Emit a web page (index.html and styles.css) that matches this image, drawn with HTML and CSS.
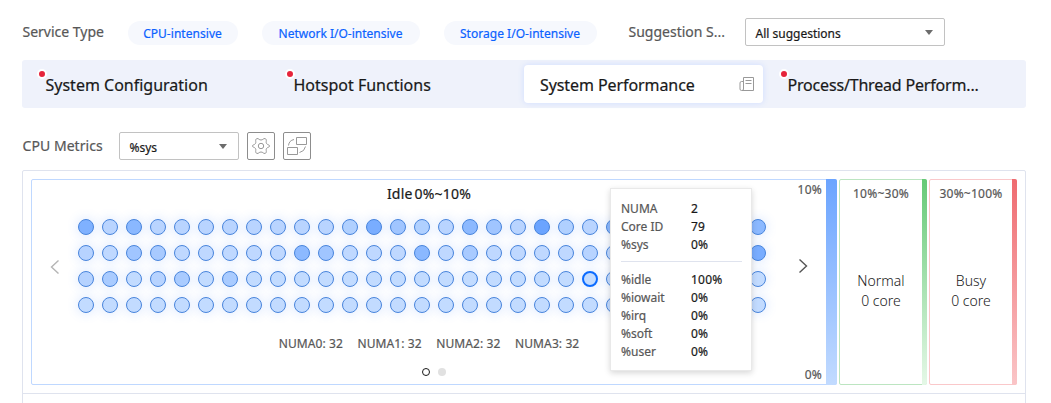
FILE: index.html
```html
<!DOCTYPE html>
<html lang="en">
<head>
<meta charset="utf-8">
<title>System Performance</title>
<link rel="stylesheet" href="styles.css">
</head>
<body>
<div class="page">
  <div class="filters">
    <span class="label label-service">Service Type</span>
    <span class="chip chip-cpu">CPU-intensive</span>
    <span class="chip chip-net">Network I/O-intensive</span>
    <span class="chip chip-sto">Storage I/O-intensive</span>
    <span class="label label-suggestion">Suggestion S...</span>
    <div class="select select-suggestion"><span>All suggestions</span><i class="caret"></i></div>
  </div>
  <div class="tabs">
    <div class="tab tab-config"><i class="dot"></i><span>System Configuration</span></div>
    <div class="tab tab-hotspot"><i class="dot"></i><span>Hotspot Functions</span></div>
    <div class="tab tab-active"><span>System Performance</span>
      <svg class="report" width="16" height="16" viewBox="0 0 16 16" fill="none" stroke="#999"><path d="M4.500 1.500h10v13H2.500a1.500 1.500 0 0 1-1.500-1.500V7a1.500 1.500 0 0 1 1.500-1.500h2M4.500 1.500V13a1.500 1.500 0 0 1-1.500 1.500M6.500 4.500h6M6.500 7.500h6"/></svg>
    </div>
    <div class="tab tab-process"><i class="dot"></i><span>Process/Thread Perform...</span></div>
  </div>
  <div class="metrics">
    <span class="label label-metrics">CPU Metrics</span>
    <div class="select select-metric"><span>%sys</span><i class="caret"></i></div>
    <button class="tool"><svg width="20" height="20" viewBox="0 0 20 20" fill="none" stroke="#999" stroke-linejoin="round"><path d="M6 2.500C8 2.500 8 4 10 4S12 2.500 14 2.500C16.500 3.500 14.500 6 15.500 7.500S18.500 8.500 18.500 10 16.500 11 15.500 12.500 16.500 16.500 14 17.500C12 17.500 12 16 10 16S8 17.500 6 17.500C3.500 16.500 5.500 14 4.500 12.500S1.500 11.500 1.500 10 3.500 9 4.500 7.500 3.500 3.500 6 2.500Z"/><circle cx="10" cy="10" r="2.700"/></svg></button>
    <button class="tool"><svg width="20" height="20" viewBox="0 0 20 20" fill="none" stroke="#999"><path d="M9.500 1.500h10v7h-10zM.500 11.500h10v7h-10zM1.500 9.500Q2 4.500 7 3.500M12.500 16.500Q17.500 15.500 18.500 10.500"/></svg></button>
  </div>
  <div class="panel">
    <div class="zones">
      <div class="idle">
        <div class="arrow"><svg width="10" height="14" viewBox="0 0 10 14" fill="none" stroke="#b5b5b5" stroke-width="1.400"><path d="M8.500 .500L1.500 7l7 6.500"/></svg></div>
        <div class="core-map">
          <div class="idle-title"><span>Idle</span><span>0%~10%</span></div>
          <div class="cores" id="cores"></div>
          <div class="numa"><span>NUMA0: 32</span><span>NUMA1: 32</span><span>NUMA2: 32</span><span>NUMA3: 32</span></div>
          <div class="pager"><i class="page-dot current"></i><i class="page-dot"></i></div>
          <div class="tooltip">
            <dl><dt>NUMA</dt><dd>2</dd><dt>Core ID</dt><dd>79</dd><dt>%sys</dt><dd>0%</dd></dl>
            <dl><dt>%idle</dt><dd>100%</dd><dt>%iowait</dt><dd>0%</dd><dt>%irq</dt><dd>0%</dd><dt>%soft</dt><dd>0%</dd><dt>%user</dt><dd>0%</dd></dl>
          </div>
        </div>
        <div class="arrow next"><svg width="10" height="14" viewBox="0 0 10 14" fill="none" stroke="#555" stroke-width="1.400"><path d="M1.500 .500L8.500 7l-7 6.500"/></svg></div>
        <div class="scale"><span>10%</span><span>0%</span></div>
        <div class="bar bar-blue"></div>
      </div>
      <div class="zone normal">
        <div class="zone-body"><span class="range">10%~30%</span><div class="state"><span>Normal</span><span>0 core</span></div></div>
        <div class="bar bar-green"></div>
      </div>
      <div class="zone busy">
        <div class="zone-body"><span class="range">30%~100%</span><div class="state"><span>Busy</span><span>0 core</span></div></div>
        <div class="bar bar-red"></div>
      </div>
    </div>
  </div>
</div>
<script src="cores.js"></script>
</body>
</html>
```
FILE: styles.css
```css
* { box-sizing: border-box; }
body { margin: 0; background: #fff; color: #191919; font: 13px/18px "Noto Sans", sans-serif; overflow: hidden; -webkit-text-stroke: .2px; }
.page { height: 403px; padding: 18px 25px 0 22px; overflow: hidden; white-space: nowrap; }
.filters { display: flex; height: 28px; align-items: center; }
.label { font-size: 14px; line-height: 20px; color: #575757; flex: none; padding-left: .5px; }
.label-service { width: 106px; }
.label-metrics { width: 97px; letter-spacing: .05px; }
.chip { flex: none; height: 24px; padding: 4px 1px 0 0; border-radius: 12px; background: #f6f8fd; color: #0b62ff; font-size: 12px; text-align: center; margin-top: 2px; }
.chip-cpu { width: 110px; margin-right: 24px; letter-spacing: .04px; }
.chip-net { width: 158px; margin-right: 24px; }
.chip-sto { width: 153px; margin-right: 31px; letter-spacing: .03px; }
.label-suggestion { width: 117px; }
.select { display: flex; justify-content: space-between; align-items: center; height: 28px; border: 1px solid #c2c2c2; border-radius: 2px; padding: 3px 11px 0 9.5px; font-size: 12px; flex: none; }
.select-suggestion { width: 200px; }
.select-metric { width: 120px; margin-right: 8px; }
.caret { border: 4px solid transparent; border-top: 5px solid #6c6c6c; border-bottom: 0; margin-top: -3px; }
.tabs { display: flex; height: 48px; margin-top: 14px; width: 1004px; background: #eff2fb; border-radius: 3px; padding: 5px 0; font-size: 16px; line-height: 24px; }
.tab { position: relative; display: flex; align-items: center; height: 38px; padding-left: 23.5px; }
.tab span { padding-top: 2px; }
.tab-config { width: 248px; }
.tab-hotspot { width: 254px; }
.tab-active { width: 239px; padding: 0 8px 0 16px; justify-content: space-between; background: #fff; border-radius: 4px; box-shadow: 0 0 6px #cfdcff; letter-spacing: -.08px; }
.tab-process { padding-left: 24.500px; letter-spacing: -.18px; }
.dot { position: absolute; left: 15px; top: 4px; width: 10px; height: 10px; border: 2px solid #fff; border-radius: 50%; background: #e6243b; }
.tab-process .dot { left: 16px; }
.metrics { display: flex; align-items: center; height: 28px; margin-top: 24px; }
.tool { width: 28px; height: 28px; margin-right: 8px; padding: 3px; border: 1px solid #8d8d8d; border-radius: 2px; background: #fff; }
.tool svg { display: block; }
.panel { width: 1004px; height: 240px; margin-top: 10px; border: 1px solid #dfe3ee; border-radius: 2px 2px 0 0; }
.zones { display: flex; gap: 2px; height: 223px; padding: 8px; border-bottom: 1px solid #dfe3ee; }
.idle { display: flex; width: 806px; height: 206px; border: 1px solid #bfd8ff; border-radius: 2px; flex: none; }
.arrow { width: 46px; padding: 80px 0 0 18px; flex: none; }
.arrow.next { width: 47px; padding: 79px 0 0 40px; }
.arrow svg { display: block; }
.core-map { position: relative; width: 680px; flex: none; }
.idle-title { display: flex; justify-content: center; gap: 2px; height: 20px; margin-top: 4px; font-size: 14px; line-height: 20px; padding-left: 22px; letter-spacing: .2px; }
.cores { display: grid; grid-template-columns: repeat(29, 16px); gap: 10px 8px; margin-top: 15px; width: 688px; }
.core { height: 16px; border: 1px solid #4985dc; border-radius: 50%; box-shadow: 0 0 12px rgba(62, 130, 255, .22); }
.core.selected { border: 2px solid #0b6bff; }
.numa { display: flex; justify-content: center; gap: 14.500px; margin-top: 22px; font-size: 12px; color: #575757; padding-left: 22px; letter-spacing: .1px; }
.pager { display: flex; justify-content: center; gap: 8px; margin-top: 15px; padding-left: 32px; }
.page-dot { width: 8px; height: 8px; border-radius: 50%; background: #e1e1e1; }
.page-dot.current { background: #fff; border: 1.5px solid #191919; }
.tooltip { position: absolute; left: 532px; top: 8px; width: 142px; height: 183px; padding: 11px 9px 0 10px; background: #fff; border: 1px solid #e9e9e9; box-shadow: 0 2px 6px rgba(0, 0, 0, .16); font-size: 12px; }
.tooltip dl { display: grid; grid-template-columns: 70px 1fr; margin: 0; line-height: 18px; }
.tooltip dl + dl { border-top: 1px solid #dfe3ee; margin-top: 7px; padding-top: 9px; }
.tooltip dt { color: #575757; }
.tooltip dd { margin: 0; letter-spacing: .25px; }
.scale { display: flex; flex-direction: column; justify-content: space-between; width: 20px; align-items: flex-end; padding: 1px 3px 0 0; font-size: 12px; color: #575757; flex: none; letter-spacing: .25px; }
.bar { flex: none; margin: -1px -1px -1px auto; }
.bar-blue { width: 11px; background: linear-gradient(#6ba4ff, #c2dbff); border-radius: 0 2px 2px 0; }
.bar-green { width: 5px; background: linear-gradient(#66c976, #e5f8e7); border-radius: 0 2px 2px 0; }
.bar-red { width: 5px; background: linear-gradient(#ef6b70, #fac5c7); border-radius: 0 2px 2px 0; }
.zone { display: flex; width: 88px; height: 206px; border: 1px solid #bce5c1; border-radius: 2px; flex: none; }
.busy { border-color: #fac8ca; }
.zone-body { width: 82px; display: flex; flex-direction: column; align-items: center; padding-top: 5px; }
.range { font-size: 12px; color: #575757; letter-spacing: .25px; }
.state { display: flex; flex-direction: column; align-items: center; margin-top: 68px; font-size: 14px; line-height: 20px; font-weight: 300; -webkit-text-stroke: 0; }
```
FILE: cores.js
```js
const base = ['#b9d4ff', '#bfd8ff', '#c2dbff', '#c2dbff'];
const loads = [
  {0: '#7fb1ff', 2: '#8ab8ff', 11: '#b0d0ff', 12: '#79adff', 13: '#a0c5ff', 14: '#b0d0ff', 16: '#8cb9ff', 17: '#a0c5ff', 19: '#6ba4ff', 20: '#b0d0ff', 22: '#8cb9ff', 28: '#8cb9ff'},
  {0: '#b7d3ff', 2: '#a0c5ff', 3: '#a8caff', 9: '#8cb9ff', 10: '#a0c5ff', 14: '#8ab8ff', 16: '#a8caff', 21: '#b7d3ff', 28: '#79adff'},
  {0: '#b5d2ff', 1: '#a9cbff', 3: '#b7d3ff', 4: '#a9cbff', 6: '#a9cbff'},
  {}
];
const grid = document.getElementById('cores');
loads.forEach((row, r) => {
  for (let c = 0; c < 29; c++) {
    const cell = document.createElement('i');
    cell.className = r === 2 && c === 21 ? 'core selected' : 'core';
    cell.style.background = row[c] || base[r];
    grid.append(cell);
  }
});
```
